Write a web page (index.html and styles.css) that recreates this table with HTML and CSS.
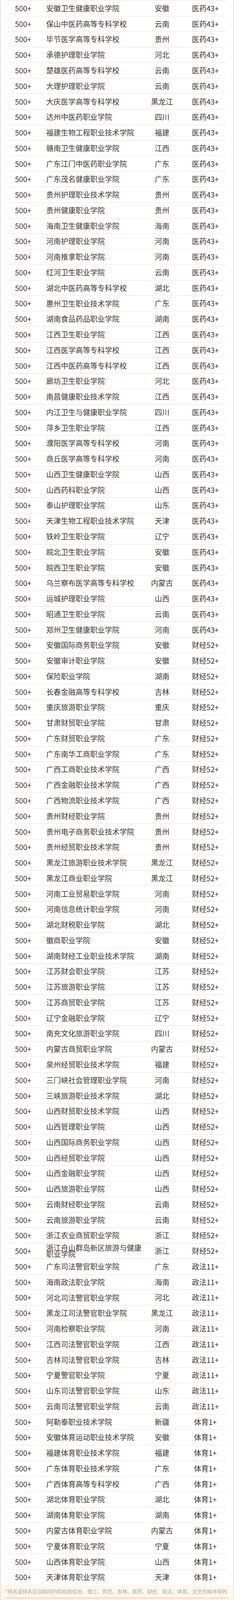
FILE: index.html
```html
<!DOCTYPE html>
<html lang="zh-CN">
<head>
<meta charset="utf-8">
<meta name="viewport" content="width=device-width, initial-scale=1">
<title>院校排名</title>
<link rel="stylesheet" href="styles.css">
</head>
<body>
<div class="card">
  <div class="list">
    <div class="row"><span class="rank">500+</span><span class="name">安徽卫生健康职业学院</span><span class="prov">安徽</span><span class="cat">医药43+</span></div>
    <div class="row"><span class="rank">500+</span><span class="name">保山中医药高等专科学校</span><span class="prov">云南</span><span class="cat">医药43+</span></div>
    <div class="row"><span class="rank">500+</span><span class="name">毕节医学高等专科学校</span><span class="prov">贵州</span><span class="cat">医药43+</span></div>
    <div class="row"><span class="rank">500+</span><span class="name">承德护理职业学院</span><span class="prov">河北</span><span class="cat">医药43+</span></div>
    <div class="row"><span class="rank">500+</span><span class="name">楚雄医药高等专科学校</span><span class="prov">云南</span><span class="cat">医药43+</span></div>
    <div class="row"><span class="rank">500+</span><span class="name">大理护理职业学院</span><span class="prov">云南</span><span class="cat">医药43+</span></div>
    <div class="row"><span class="rank">500+</span><span class="name">大庆医学高等专科学校</span><span class="prov">黑龙江</span><span class="cat">医药43+</span></div>
    <div class="row"><span class="rank">500+</span><span class="name">达州中医药职业学院</span><span class="prov">四川</span><span class="cat">医药43+</span></div>
    <div class="row"><span class="rank">500+</span><span class="name">福建生物工程职业技术学院</span><span class="prov">福建</span><span class="cat">医药43+</span></div>
    <div class="row"><span class="rank">500+</span><span class="name">赣南卫生健康职业学院</span><span class="prov">江西</span><span class="cat">医药43+</span></div>
    <div class="row"><span class="rank">500+</span><span class="name">广东江门中医药职业学院</span><span class="prov">广东</span><span class="cat">医药43+</span></div>
    <div class="row"><span class="rank">500+</span><span class="name">广东茂名健康职业学院</span><span class="prov">广东</span><span class="cat">医药43+</span></div>
    <div class="row"><span class="rank">500+</span><span class="name">贵州护理职业技术学院</span><span class="prov">贵州</span><span class="cat">医药43+</span></div>
    <div class="row"><span class="rank">500+</span><span class="name">贵州健康职业学院</span><span class="prov">贵州</span><span class="cat">医药43+</span></div>
    <div class="row"><span class="rank">500+</span><span class="name">海南卫生健康职业学院</span><span class="prov">海南</span><span class="cat">医药43+</span></div>
    <div class="row"><span class="rank">500+</span><span class="name">河南护理职业学院</span><span class="prov">河南</span><span class="cat">医药43+</span></div>
    <div class="row"><span class="rank">500+</span><span class="name">河南推拿职业学院</span><span class="prov">河南</span><span class="cat">医药43+</span></div>
    <div class="row"><span class="rank">500+</span><span class="name">红河卫生职业学院</span><span class="prov">云南</span><span class="cat">医药43+</span></div>
    <div class="row"><span class="rank">500+</span><span class="name">湖北中医药高等专科学校</span><span class="prov">湖北</span><span class="cat">医药43+</span></div>
    <div class="row"><span class="rank">500+</span><span class="name">惠州卫生职业技术学院</span><span class="prov">广东</span><span class="cat">医药43+</span></div>
    <div class="row"><span class="rank">500+</span><span class="name">湖南食品药品职业学院</span><span class="prov">湖南</span><span class="cat">医药43+</span></div>
    <div class="row"><span class="rank">500+</span><span class="name">江西卫生职业学院</span><span class="prov">江西</span><span class="cat">医药43+</span></div>
    <div class="row"><span class="rank">500+</span><span class="name">江西医学高等专科学校</span><span class="prov">江西</span><span class="cat">医药43+</span></div>
    <div class="row"><span class="rank">500+</span><span class="name">江西中医药高等专科学校</span><span class="prov">江西</span><span class="cat">医药43+</span></div>
    <div class="row"><span class="rank">500+</span><span class="name">廊坊卫生职业学院</span><span class="prov">河北</span><span class="cat">医药43+</span></div>
    <div class="row"><span class="rank">500+</span><span class="name">南昌健康职业技术学院</span><span class="prov">江西</span><span class="cat">医药43+</span></div>
    <div class="row"><span class="rank">500+</span><span class="name">内江卫生与健康职业学院</span><span class="prov">四川</span><span class="cat">医药43+</span></div>
    <div class="row"><span class="rank">500+</span><span class="name">萍乡卫生职业学院</span><span class="prov">江西</span><span class="cat">医药43+</span></div>
    <div class="row"><span class="rank">500+</span><span class="name">濮阳医学高等专科学校</span><span class="prov">河南</span><span class="cat">医药43+</span></div>
    <div class="row"><span class="rank">500+</span><span class="name">商丘医学高等专科学校</span><span class="prov">河南</span><span class="cat">医药43+</span></div>
    <div class="row"><span class="rank">500+</span><span class="name">山西卫生健康职业学院</span><span class="prov">山西</span><span class="cat">医药43+</span></div>
    <div class="row"><span class="rank">500+</span><span class="name">山西药科职业学院</span><span class="prov">山西</span><span class="cat">医药43+</span></div>
    <div class="row"><span class="rank">500+</span><span class="name">泰山护理职业学院</span><span class="prov">山东</span><span class="cat">医药43+</span></div>
    <div class="row"><span class="rank">500+</span><span class="name">天津生物工程职业技术学院</span><span class="prov">天津</span><span class="cat">医药43+</span></div>
    <div class="row"><span class="rank">500+</span><span class="name">铁岭卫生职业学院</span><span class="prov">辽宁</span><span class="cat">医药43+</span></div>
    <div class="row"><span class="rank">500+</span><span class="name">皖北卫生职业学院</span><span class="prov">安徽</span><span class="cat">医药43+</span></div>
    <div class="row"><span class="rank">500+</span><span class="name">皖西卫生职业学院</span><span class="prov">安徽</span><span class="cat">医药43+</span></div>
    <div class="row"><span class="rank">500+</span><span class="name">乌兰察布医学高等专科学校</span><span class="prov">内蒙古</span><span class="cat">医药43+</span></div>
    <div class="row"><span class="rank">500+</span><span class="name">运城护理职业学院</span><span class="prov">山西</span><span class="cat">医药43+</span></div>
    <div class="row"><span class="rank">500+</span><span class="name">昭通卫生职业学院</span><span class="prov">云南</span><span class="cat">医药43+</span></div>
    <div class="row"><span class="rank">500+</span><span class="name">郑州卫生健康职业学院</span><span class="prov">河南</span><span class="cat">医药43+</span></div>
    <div class="row"><span class="rank">500+</span><span class="name">安徽国际商务职业学院</span><span class="prov">安徽</span><span class="cat">财经52+</span></div>
    <div class="row"><span class="rank">500+</span><span class="name">安徽审计职业学院</span><span class="prov">安徽</span><span class="cat">财经52+</span></div>
    <div class="row"><span class="rank">500+</span><span class="name">保险职业学院</span><span class="prov">湖南</span><span class="cat">财经52+</span></div>
    <div class="row"><span class="rank">500+</span><span class="name">长春金融高等专科学校</span><span class="prov">吉林</span><span class="cat">财经52+</span></div>
    <div class="row"><span class="rank">500+</span><span class="name">重庆旅游职业学院</span><span class="prov">重庆</span><span class="cat">财经52+</span></div>
    <div class="row"><span class="rank">500+</span><span class="name">甘肃财贸职业学院</span><span class="prov">甘肃</span><span class="cat">财经52+</span></div>
    <div class="row"><span class="rank">500+</span><span class="name">广东财贸职业学院</span><span class="prov">广东</span><span class="cat">财经52+</span></div>
    <div class="row"><span class="rank">500+</span><span class="name">广东南华工商职业学院</span><span class="prov">广东</span><span class="cat">财经52+</span></div>
    <div class="row"><span class="rank">500+</span><span class="name">广西工商职业技术学院</span><span class="prov">广西</span><span class="cat">财经52+</span></div>
    <div class="row"><span class="rank">500+</span><span class="name">广西金融职业技术学院</span><span class="prov">广西</span><span class="cat">财经52+</span></div>
    <div class="row"><span class="rank">500+</span><span class="name">广西物流职业技术学院</span><span class="prov">广西</span><span class="cat">财经52+</span></div>
    <div class="row"><span class="rank">500+</span><span class="name">贵州财经职业学院</span><span class="prov">贵州</span><span class="cat">财经52+</span></div>
    <div class="row"><span class="rank">500+</span><span class="name">贵州电子商务职业技术学院</span><span class="prov">贵州</span><span class="cat">财经52+</span></div>
    <div class="row"><span class="rank">500+</span><span class="name">贵州经贸职业技术学院</span><span class="prov">贵州</span><span class="cat">财经52+</span></div>
    <div class="row"><span class="rank">500+</span><span class="name">黑龙江旅游职业技术学院</span><span class="prov">黑龙江</span><span class="cat">财经52+</span></div>
    <div class="row"><span class="rank">500+</span><span class="name">黑龙江商业职业学院</span><span class="prov">黑龙江</span><span class="cat">财经52+</span></div>
    <div class="row"><span class="rank">500+</span><span class="name">河南工业贸易职业学院</span><span class="prov">河南</span><span class="cat">财经52+</span></div>
    <div class="row"><span class="rank">500+</span><span class="name">河南信息统计职业学院</span><span class="prov">河南</span><span class="cat">财经52+</span></div>
    <div class="row"><span class="rank">500+</span><span class="name">湖北财税职业学院</span><span class="prov">湖北</span><span class="cat">财经52+</span></div>
    <div class="row"><span class="rank">500+</span><span class="name">徽商职业学院</span><span class="prov">安徽</span><span class="cat">财经52+</span></div>
    <div class="row"><span class="rank">500+</span><span class="name">湖南财经工业职业技术学院</span><span class="prov">湖南</span><span class="cat">财经52+</span></div>
    <div class="row"><span class="rank">500+</span><span class="name">江苏财会职业学院</span><span class="prov">江苏</span><span class="cat">财经52+</span></div>
    <div class="row"><span class="rank">500+</span><span class="name">江苏旅游职业学院</span><span class="prov">江苏</span><span class="cat">财经52+</span></div>
    <div class="row"><span class="rank">500+</span><span class="name">江苏商贸职业学院</span><span class="prov">江苏</span><span class="cat">财经52+</span></div>
    <div class="row"><span class="rank">500+</span><span class="name">辽宁金融职业学院</span><span class="prov">辽宁</span><span class="cat">财经52+</span></div>
    <div class="row"><span class="rank">500+</span><span class="name">南充文化旅游职业学院</span><span class="prov">四川</span><span class="cat">财经52+</span></div>
    <div class="row"><span class="rank">500+</span><span class="name">内蒙古商贸职业学院</span><span class="prov">内蒙古</span><span class="cat">财经52+</span></div>
    <div class="row"><span class="rank">500+</span><span class="name">泉州经贸职业技术学院</span><span class="prov">福建</span><span class="cat">财经52+</span></div>
    <div class="row"><span class="rank">500+</span><span class="name">三门峡社会管理职业学院</span><span class="prov">河南</span><span class="cat">财经52+</span></div>
    <div class="row"><span class="rank">500+</span><span class="name">三峡旅游职业技术学院</span><span class="prov">湖北</span><span class="cat">财经52+</span></div>
    <div class="row"><span class="rank">500+</span><span class="name">山西财贸职业技术学院</span><span class="prov">山西</span><span class="cat">财经52+</span></div>
    <div class="row"><span class="rank">500+</span><span class="name">山西管理职业学院</span><span class="prov">山西</span><span class="cat">财经52+</span></div>
    <div class="row"><span class="rank">500+</span><span class="name">山西国际商务职业学院</span><span class="prov">山西</span><span class="cat">财经52+</span></div>
    <div class="row"><span class="rank">500+</span><span class="name">山西经贸职业学院</span><span class="prov">山西</span><span class="cat">财经52+</span></div>
    <div class="row"><span class="rank">500+</span><span class="name">山西金融职业学院</span><span class="prov">山西</span><span class="cat">财经52+</span></div>
    <div class="row"><span class="rank">500+</span><span class="name">山西旅游职业学院</span><span class="prov">山西</span><span class="cat">财经52+</span></div>
    <div class="row"><span class="rank">500+</span><span class="name">云南财经职业学院</span><span class="prov">云南</span><span class="cat">财经52+</span></div>
    <div class="row"><span class="rank">500+</span><span class="name">云南旅游职业学院</span><span class="prov">云南</span><span class="cat">财经52+</span></div>
    <div class="row"><span class="rank">500+</span><span class="name">浙江农业商贸职业学院</span><span class="prov">浙江</span><span class="cat">财经52+</span></div>
    <div class="row"><span class="rank">500+</span><span class="name">浙江舟山群岛新区旅游与健康职业学院</span><span class="prov">浙江</span><span class="cat">财经52+</span></div>
    <div class="row"><span class="rank">500+</span><span class="name">广东司法警官职业学院</span><span class="prov">广东</span><span class="cat">政法11+</span></div>
    <div class="row"><span class="rank">500+</span><span class="name">海南政法职业学院</span><span class="prov">海南</span><span class="cat">政法11+</span></div>
    <div class="row"><span class="rank">500+</span><span class="name">河北司法警官职业学院</span><span class="prov">河北</span><span class="cat">政法11+</span></div>
    <div class="row"><span class="rank">500+</span><span class="name">黑龙江司法警官职业学院</span><span class="prov">黑龙江</span><span class="cat">政法11+</span></div>
    <div class="row"><span class="rank">500+</span><span class="name">河南检察职业学院</span><span class="prov">河南</span><span class="cat">政法11+</span></div>
    <div class="row"><span class="rank">500+</span><span class="name">江西司法警官职业学院</span><span class="prov">江西</span><span class="cat">政法11+</span></div>
    <div class="row"><span class="rank">500+</span><span class="name">吉林司法警官职业学院</span><span class="prov">吉林</span><span class="cat">政法11+</span></div>
    <div class="row"><span class="rank">500+</span><span class="name">宁夏警官职业学院</span><span class="prov">宁夏</span><span class="cat">政法11+</span></div>
    <div class="row"><span class="rank">500+</span><span class="name">山东司法警官职业学院</span><span class="prov">山东</span><span class="cat">政法11+</span></div>
    <div class="row"><span class="rank">500+</span><span class="name">云南司法警官职业学院</span><span class="prov">云南</span><span class="cat">政法11+</span></div>
    <div class="row"><span class="rank">500+</span><span class="name">阿勒泰职业技术学院</span><span class="prov">新疆</span><span class="cat">体育1+</span></div>
    <div class="row"><span class="rank">500+</span><span class="name">安徽体育运动职业技术学院</span><span class="prov">安徽</span><span class="cat">体育1+</span></div>
    <div class="row"><span class="rank">500+</span><span class="name">福建体育职业技术学院</span><span class="prov">福建</span><span class="cat">体育1+</span></div>
    <div class="row"><span class="rank">500+</span><span class="name">广东体育职业技术学院</span><span class="prov">广东</span><span class="cat">体育1+</span></div>
    <div class="row"><span class="rank">500+</span><span class="name">广西体育高等专科学校</span><span class="prov">广西</span><span class="cat">体育1+</span></div>
    <div class="row"><span class="rank">500+</span><span class="name">湖北体育职业学院</span><span class="prov">湖北</span><span class="cat">体育1+</span></div>
    <div class="row"><span class="rank">500+</span><span class="name">湖南体育职业学院</span><span class="prov">湖南</span><span class="cat">体育1+</span></div>
    <div class="row"><span class="rank">500+</span><span class="name">内蒙古体育职业学院</span><span class="prov">内蒙古</span><span class="cat">体育1+</span></div>
    <div class="row"><span class="rank">500+</span><span class="name">宁夏体育职业学院</span><span class="prov">宁夏</span><span class="cat">体育1+</span></div>
    <div class="row"><span class="rank">500+</span><span class="name">山西体育职业学院</span><span class="prov">山西</span><span class="cat">体育1+</span></div>
    <div class="row"><span class="rank">500+</span><span class="name">天津体育职业学院</span><span class="prov">天津</span><span class="cat">体育1+</span></div>
  </div>
  <div class="foot">
    <p class="note">*排名或排名区间相同的院校按综合、理工、师范、农林、医药、财经、政法、体育、文艺的顺序排列</p>
    <div class="rule"></div>
  </div>
</div>
</body>
</html>
```
FILE: styles.css
```css
:root {
  --u: calc(100vw / 600);
  --v: calc(100vh / 4863);
}

html, body {
  margin: 0;
  padding: 0;
}

body {
  background: #ebe4cd;
  font-family: "Noto Sans CJK SC", "Noto Sans", sans-serif;
  color: #3b332f;
  overflow-x: hidden;
}

.card {
  margin: 0 calc(2 * var(--u));
  background: #ffffff;
}

.list {
  padding: var(--v) calc(18 * var(--u)) 0;
}

.row {
  display: grid;
  grid-template-columns:
    calc(78.6 * var(--u))
    calc(274.4 * var(--u))
    calc(85 * var(--u))
    calc(122 * var(--u));
  align-items: center;
  box-sizing: border-box;
  height: calc(47.22 * var(--v));
  border-top: 1px solid #e9e3de;
  font-size: calc(18.8 * var(--u));
  line-height: 1.2;
}

.rank {
  text-align: center;
}

.name {
  padding-left: calc(20 * var(--u));
  line-height: calc(18.4 * var(--v) + 1px);
}

.prov {
  text-align: center;
}

.cat {
  text-align: center;
  padding-left: calc(15 * var(--u));
}

.foot {
  background: #fdf7ef;
  padding: calc(13 * var(--v)) calc(11 * var(--u)) calc(4 * var(--v));
}

.note {
  margin: 0;
  font-size: calc(12.8 * var(--u));
  line-height: calc(15 * var(--v));
  color: #b3a89e;
  white-space: nowrap;
}

.rule {
  height: 2px;
  margin-top: calc(11 * var(--v));
  background: #f3caa9;
}
```
